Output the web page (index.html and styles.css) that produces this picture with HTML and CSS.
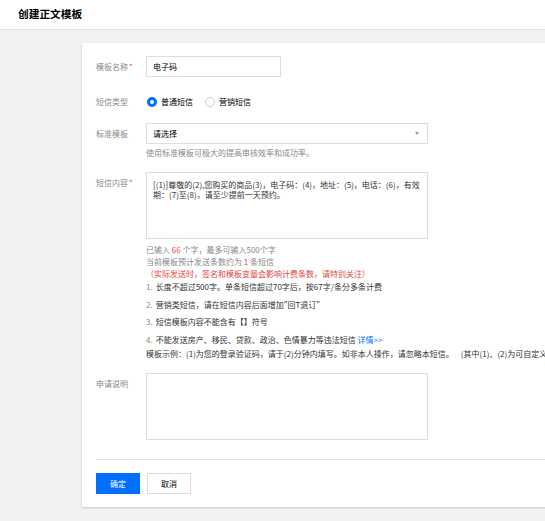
FILE: index.html
```html
<!DOCTYPE html>
<html lang="zh-CN">
<head>
<meta charset="utf-8">
<title>创建正文模板</title>
<link rel="stylesheet" href="styles.css">
</head>
<body>
<div class="page">
  <header class="topbar">
    <h1 class="title">创建正文模板</h1>
  </header>
  <main class="content">
    <section class="card">
      <div class="row row-name">
        <div class="label">模板名称<span class="req">*</span></div>
        <div class="ctrl">
          <input class="input" type="text" value="电子码">
        </div>
      </div>

      <div class="row row-type">
        <div class="label">短信类型</div>
        <div class="ctrl radios">
          <span class="radio checked"><i class="dot"></i>普通短信</span>
          <span class="radio"><i class="dot"></i>营销短信</span>
        </div>
      </div>

      <div class="row row-std">
        <div class="label">标准模板</div>
        <div class="ctrl">
          <div class="select"><span>请选择</span><i class="caret"></i></div>
          <div class="hint">使用标准模板可极大的提高审核效率和成功率。</div>
        </div>
      </div>

      <div class="row row-content">
        <div class="label">短信内容<span class="req">*</span></div>
        <div class="ctrl">
          <textarea class="textarea">[(1)]尊敬的(2),您购买的商品(3)，电子码：(4)，地址：(5)，电话：(6)，有效期：(7)至(8)，请至少提前一天预约。</textarea>
          <div class="info">
            <p class="gray">已输入 <em>66</em> 个字，最多可输入500个字</p>
            <p class="gray">当前模板预计发送条数约为 <em>1</em> 条短信</p>
            <p class="red">（实际发送时，签名和模板变量会影响计费条数，请特别关注）</p>
            <ol class="rules">
              <li><span class="num">1.</span>长度不超过500字。单条短信超过70字后，按67字/条分多条计费</li>
              <li><span class="num">2.</span>营销类短信，请在短信内容后面增加"回T退订"</li>
              <li><span class="num">3.</span>短信模板内容不能含有【】符号</li>
              <li><span class="num">4.</span>不能发送房产、移民、贷款、政治、色情暴力等违法短信 <a class="link" href="#">详情&gt;&gt;</a></li>
            </ol>
            <p class="example">模板示例：(1)为您的登录验证码，请于(2)分钟内填写。如非本人操作，请忽略本短信。&nbsp;&nbsp;&nbsp;&nbsp;(其中(1)、(2)为可自定义内容)</p>
          </div>
        </div>
      </div>

      <div class="row row-desc">
        <div class="label">申请说明</div>
        <div class="ctrl">
          <textarea class="textarea"></textarea>
        </div>
      </div>

      <div class="footer">
        <button class="btn primary" type="button">确定</button>
        <button class="btn" type="button">取消</button>
      </div>
    </section>
  </main>
</div>
</body>
</html>
```

FILE: styles.css
```css
* { box-sizing: border-box; }
html, body {
  margin: 0;
  padding: 0;
  background: #f2f2f2;
  overflow: hidden;
}
body {
  font-family: "Noto Sans CJK SC", "Noto Sans", sans-serif;
  font-size: 8px;
  color: #333;
}
.page {
  width: 545px;
  height: 521px;
  overflow: hidden;
}
.topbar {
  height: 30px;
  background: #fff;
  border-bottom: 1px solid #e2e2e2;
  padding-left: 18px;
}
.title {
  margin: 0;
  font-size: 10.7px;
  line-height: 27px;
  font-weight: 700;
  color: #000;
}
.content {
  padding: 13px 0 0 82px;
}
.card {
  width: 600px;
  background: #fff;
  padding: 13px 0 13px 14px;
  box-shadow: 0 1px 2px rgba(0, 0, 0, 0.18);
}
.row {
  display: flex;
  align-items: flex-start;
}
.label {
  width: 50px;
  flex: none;
  line-height: 21px;
  color: #888;
}
.req {
  color: #e54545;
  margin-left: 1px;
}
.ctrl {
  flex: none;
}
.row-name { margin-bottom: 14px; }
.row-type { margin-bottom: 11px; }
.row-std { margin-bottom: 13px; }
.row-content { margin-bottom: 13px; }

.input {
  display: block;
  width: 135px;
  height: 21px;
  border: 1px solid #dddddd;
  padding: 0 6px;
  font: inherit;
  color: #000;
  outline: none;
}
.radios {
  display: flex;
  align-items: center;
  height: 21px;
}
.radio {
  display: flex;
  align-items: center;
  color: #000;
  margin-right: 11px;
}
.dot {
  width: 10px;
  height: 10px;
  border-radius: 50%;
  border: 1px solid #d0d0d0;
  background: #fff;
  margin: 0 4px 0 1px;
}
.radio.checked .dot {
  border: 3px solid #006eff;
}
.select {
  width: 282px;
  height: 21px;
  border: 1px solid #dddddd;
  padding: 0 6px;
  display: flex;
  align-items: center;
  justify-content: space-between;
  color: #000;
}
.caret {
  width: 0;
  height: 0;
  border-left: 2.5px solid transparent;
  border-right: 2.5px solid transparent;
  border-top: 3px solid #999;
  margin-right: 2px;
}
.hint {
  margin-top: 3px;
  line-height: 12px;
  color: #888;
}
.textarea {
  display: block;
  width: 282px;
  height: 67px;
  border: 1px solid #dddddd;
  padding: 7px 6px;
  font: inherit;
  line-height: 9.5px;
  color: #333;
  resize: none;
  outline: none;
  overflow: hidden;
}
.info {
  margin-top: 5px;
  line-height: 12px;
}
.info p { margin: 0; }
.gray { color: #888; }
.gray em {
  font-style: normal;
  color: #e54545;
}
.red { color: #e54545; }
.rules {
  list-style: none;
  margin: 1px 0 0;
  padding: 0;
  color: #333;
}
.rules li {
  margin-bottom: 5.5px;
  white-space: nowrap;
}
.rules li:last-child { margin-bottom: 2.5px; }
.num {
  color: #888;
  margin-right: 3px;
}
.link {
  color: #006eff;
  text-decoration: none;
}
.example {
  white-space: nowrap;
  color: #333;
}
.footer {
  margin-top: 19px;
  border-top: 1px solid #e2e2e2;
  padding-top: 13px;
  display: flex;
  gap: 7px;
}
.btn {
  width: 44px;
  height: 21px;
  border: 1px solid #dddddd;
  background: #fff;
  font: inherit;
  color: #000;
  padding: 0;
  cursor: pointer;
}
.btn.primary {
  background: #006eff;
  border-color: #006eff;
  color: #fff;
}
```
